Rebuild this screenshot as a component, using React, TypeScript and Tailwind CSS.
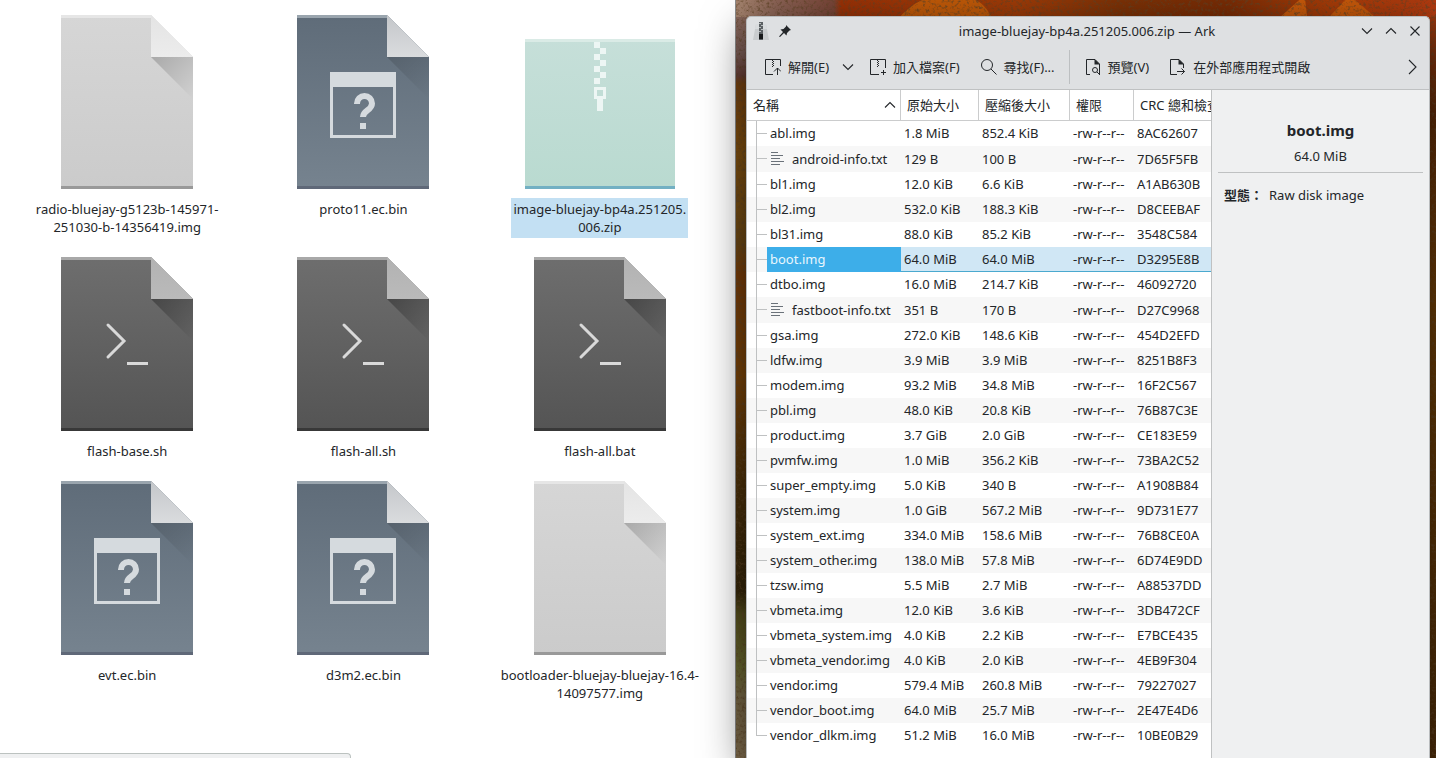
import type { ReactNode } from 'react';
import clsx from 'clsx';

type FileKind = 'raw' | 'binary' | 'script' | 'zip';

interface FileItem {
  name: string;
  lines: string[];
  kind: FileKind;
  selected?: boolean;
}

interface Entry {
  name: string;
  size: string;
  packed: string;
  crc: string;
}

const files: FileItem[] = [
  { name: 'radio', lines: ['radio-bluejay-g5123b-145971-', '251030-b-14356419.img'], kind: 'raw' },
  { name: 'proto11', lines: ['proto11.ec.bin'], kind: 'binary' },
  { name: 'image', lines: ['image-bluejay-bp4a.251205.', '006.zip'], kind: 'zip', selected: true },
  { name: 'flash-base', lines: ['flash-base.sh'], kind: 'script' },
  { name: 'flash-all-sh', lines: ['flash-all.sh'], kind: 'script' },
  { name: 'flash-all-bat', lines: ['flash-all.bat'], kind: 'script' },
  { name: 'evt', lines: ['evt.ec.bin'], kind: 'binary' },
  { name: 'd3m2', lines: ['d3m2.ec.bin'], kind: 'binary' },
  { name: 'bootloader', lines: ['bootloader-bluejay-bluejay-16.4-', '14097577.img'], kind: 'raw' },
];

const entries: Entry[] = [
  { name: 'abl.img', size: '1.8 MiB', packed: '852.4 KiB', crc: '8AC62607' },
  { name: 'android-info.txt', size: '129 B', packed: '100 B', crc: '7D65F5FB' },
  { name: 'bl1.img', size: '12.0 KiB', packed: '6.6 KiB', crc: 'A1AB630B' },
  { name: 'bl2.img', size: '532.0 KiB', packed: '188.3 KiB', crc: 'D8CEEBAF' },
  { name: 'bl31.img', size: '88.0 KiB', packed: '85.2 KiB', crc: '3548C584' },
  { name: 'boot.img', size: '64.0 MiB', packed: '64.0 MiB', crc: 'D3295E8B' },
  { name: 'dtbo.img', size: '16.0 MiB', packed: '214.7 KiB', crc: '46092720' },
  { name: 'fastboot-info.txt', size: '351 B', packed: '170 B', crc: 'D27C9968' },
  { name: 'gsa.img', size: '272.0 KiB', packed: '148.6 KiB', crc: '454D2EFD' },
  { name: 'ldfw.img', size: '3.9 MiB', packed: '3.9 MiB', crc: '8251B8F3' },
  { name: 'modem.img', size: '93.2 MiB', packed: '34.8 MiB', crc: '16F2C567' },
  { name: 'pbl.img', size: '48.0 KiB', packed: '20.8 KiB', crc: '76B87C3E' },
  { name: 'product.img', size: '3.7 GiB', packed: '2.0 GiB', crc: 'CE183E59' },
  { name: 'pvmfw.img', size: '1.0 MiB', packed: '356.2 KiB', crc: '73BA2C52' },
  { name: 'super_empty.img', size: '5.0 KiB', packed: '340 B', crc: 'A1908B84' },
  { name: 'system.img', size: '1.0 GiB', packed: '567.2 MiB', crc: '9D731E77' },
  { name: 'system_ext.img', size: '334.0 MiB', packed: '158.6 MiB', crc: '76B8CE0A' },
  { name: 'system_other.img', size: '138.0 MiB', packed: '57.8 MiB', crc: '6D74E9DD' },
  { name: 'tzsw.img', size: '5.5 MiB', packed: '2.7 MiB', crc: 'A88537DD' },
  { name: 'vbmeta.img', size: '12.0 KiB', packed: '3.6 KiB', crc: '3DB472CF' },
  { name: 'vbmeta_system.img', size: '4.0 KiB', packed: '2.2 KiB', crc: 'E7BCE435' },
  { name: 'vbmeta_vendor.img', size: '4.0 KiB', packed: '2.0 KiB', crc: '4EB9F304' },
  { name: 'vendor.img', size: '579.4 MiB', packed: '260.8 MiB', crc: '79227027' },
  { name: 'vendor_boot.img', size: '64.0 MiB', packed: '25.7 MiB', crc: '2E47E4D6' },
  { name: 'vendor_dlkm.img', size: '51.2 MiB', packed: '16.0 MiB', crc: '10BE0B29' },
];

const palettes = {
  raw: { top: '#d6d6d6', bottom: '#cbcbcb', edge: '#e6e6e6', base: '#999999', foldA: '#e4e4e4', foldB: '#ececec', shade: 0.2 },
  binary: { top: '#5f6c79', bottom: '#76838f', edge: '#9aa5ae', base: '#5f6878', foldA: '#c4c7ca', foldB: '#dadcde', shade: 0.14 },
  script: { top: '#6e6e6e', bottom: '#545454', edge: '#a8a8a8', base: '#383838', foldA: '#b2b2b2', foldB: '#bababa', shade: 0.32 },
};

function PageIcon({ kind }: { kind: 'raw' | 'binary' | 'script' }) {
  const p = palettes[kind];
  return (
    <svg width="132" height="174" viewBox="0 0 132 174" aria-hidden="true">
      <defs>
        <linearGradient id={`page-${kind}`} x1="0" y1="0" x2="0" y2="1">
          <stop offset="0" stopColor={p.top} />
          <stop offset="1" stopColor={p.bottom} />
        </linearGradient>
        <linearGradient id={`fold-${kind}`} x1="0" y1="0" x2="0" y2="1">
          <stop offset="0" stopColor={p.foldA} />
          <stop offset="1" stopColor={p.foldB} />
        </linearGradient>
        <linearGradient id={`shade-${kind}`} gradientUnits="userSpaceOnUse" x1="90" y1="42" x2="132" y2="84">
          <stop offset="0" stopColor="#000" stopOpacity={p.shade} />
          <stop offset="1" stopColor="#000" stopOpacity="0" />
        </linearGradient>
      </defs>
      <path d="M0 0H90L132 42V174H0Z" fill={`url(#page-${kind})`} />
      <path d="M0 0H90V3H0Z" fill={p.edge} />
      <path d="M0 171H132V174H0Z" fill={p.base} />
      <path d="M90 42H132V84Z" fill={`url(#shade-${kind})`} />
      <path d="M90 0L132 42H90Z" fill={`url(#fold-${kind})`} />
      {kind === 'binary' && (
        <g fill="#d5dade">
          <path fillRule="evenodd" d="M33 57H99V123H33ZM36 72V120H96V72Z" />
          <path d="M63 108H69V114H63Z" />
          <path d="M60 89V88.500A7.500 7.500 0 0 1 75 88.500C75 95.500 66 95 66 102" fill="none" stroke="#d5dade" strokeWidth="6" />
        </g>
      )}
      {kind === 'script' && (
        <g fill="none" stroke="#d9d9d9" strokeWidth="3">
          <path d="M47 68L63 84L47 100" strokeLinecap="round" />
          <path d="M66 106.500H87" />
        </g>
      )}
    </svg>
  );
}

function ZipIcon() {
  return (
    <svg width="150" height="150" viewBox="0 0 150 150" aria-hidden="true">
      <defs>
        <linearGradient id="zip-body" x1="0" y1="0" x2="0" y2="1">
          <stop offset="0" stopColor="#c6dfd9" />
          <stop offset="1" stopColor="#b9dad0" />
        </linearGradient>
      </defs>
      <path d="M0 0H150V150H0Z" fill="url(#zip-body)" />
      <path d="M0 0H150V3H0Z" fill="#daebe6" />
      <path d="M0 147H150V150H0Z" fill="#72b0c3" />
      <g fill="#edf6f4">
        <path d="M69 3h6v6h-6zM75 9h6v6h-6zM69 15h6v6h-6zM75 21h6v6h-6zM69 27h6v6h-6zM75 33h6v6h-6zM69 39h6v6h-6z" />
        <path fillRule="evenodd" d="M69 48H81V60H78V72H72V60H69ZM72 51V57H78V51Z" />
      </g>
    </svg>
  );
}

function Glyph({ children }: { children: ReactNode }) {
  return (
    <svg
      className="shrink-0"
      width="16"
      height="16"
      viewBox="0 0 16 16"
      fill="none"
      stroke="#232629"
      strokeWidth="1"
      aria-hidden="true"
    >
      {children}
    </svg>
  );
}

const zipTeeth = 'M7 1h1v1h-1zM8 2h1v1h-1zM7 3h1v1h-1zM8 4h1v1h-1zM7 5h1v1h-1zM8 6h1v1h-1zM7 7h1v1h-1z';

function ExtractGlyph() {
  return (
    <Glyph>
      <path d="M8 15.500H.5V.5H15.500V7" />
      <path d={zipTeeth} fill="#232629" stroke="none" />
      <path d="M12.500 16V9M9 12.500L12.500 9L16 12.500" />
    </Glyph>
  );
}

function AddGlyph() {
  return (
    <Glyph>
      <path d="M9 15.500H.5V.5H15.500V9" />
      <path d={zipTeeth} fill="#232629" stroke="none" />
      <path d="M13.500 11V16M11 13.500H16" />
    </Glyph>
  );
}

function SearchGlyph() {
  return (
    <Glyph>
      <circle cx="6" cy="6" r="5.500" />
      <path d="M10 10L15.500 15.500" />
    </Glyph>
  );
}

function PreviewGlyph() {
  return (
    <Glyph>
      <path d="M5 15.500H1.500V.5H10L14.500 5V15" />
      <path d="M9.500 0L15 5.500H9.500Z" fill="#232629" stroke="none" />
      <circle cx="10" cy="11" r="2.500" />
      <path d="M12 13L15 16" />
    </Glyph>
  );
}

function OpenGlyph() {
  return (
    <Glyph>
      <path d="M7 15.500H.5V.5H9L13.500 5V9" />
      <path d="M8.500 0L14 5.500H8.500Z" fill="#232629" stroke="none" />
      <path d="M7 12.500H14.500M11.500 9.500L14.500 12.500L11.500 15.500" />
    </Glyph>
  );
}

function Chevron({ d, width = 12, height = 12, label }: { d: string; width?: number; height?: number; label?: string }) {
  return (
    <svg
      width={width}
      height={height}
      viewBox={`0 0 ${width} ${height}`}
      fill="none"
      stroke="#232629"
      strokeWidth="1.100"
      role={label ? 'img' : undefined}
      aria-hidden={label ? undefined : true}
      aria-label={label}
    >
      <path d={d} />
    </svg>
  );
}

function TextFileGlyph() {
  return (
    <svg className="mr-[8px] ml-px shrink-0" width="13" height="13" viewBox="0 0 13 13" fill="none" stroke="#6b727a" aria-hidden="true">
      <path d="M0 .5H7M0 3.500H12M0 6.500H9M0 9.500H13M0 12.500H9" />
    </svg>
  );
}

function FileManager() {
  return (
    <main className="relative min-w-0 overflow-hidden bg-white">
      <ul className="grid grid-cols-3 gap-y-[19px] pt-[15px] pr-[17px] pl-[9px]">
        {files.map((f) => (
          <li key={f.name} className="flex flex-col items-center">
            <div className="flex h-[174px] items-end">
              {f.kind === 'zip' ? <ZipIcon /> : <PageIcon kind={f.kind} />}
            </div>
            <p
              className={clsx(
                'mt-[9px] p-[2px] text-center text-[13px] leading-[18px] whitespace-nowrap',
                f.selected && 'bg-[#c3e0f3]',
              )}
            >
              {f.lines.map((line) => (
                <span key={line} className="block">
                  {line}
                </span>
              ))}
            </p>
          </li>
        ))}
      </ul>
      {/* status popup peeking in at the bottom edge */}
      <div className="absolute bottom-0 left-0 h-[5px] w-[351px] rounded-tr-[4px] border-t border-r border-[#bcc2c0] bg-[#eff0f1]" />
    </main>
  );
}

function Wallpaper() {
  return (
    <svg className="absolute inset-0 h-full w-full" viewBox="0 0 701 758" preserveAspectRatio="none" aria-hidden="true">
      <defs>
        <linearGradient id="wall-left" x1="0" y1="0" x2="0" y2="1">
          <stop offset="0" stopColor="#8d6a5c" />
          <stop offset=".07" stopColor="#7d5f58" />
          <stop offset=".1" stopColor="#6b4038" />
          <stop offset=".11" stopColor="#7a4410" />
          <stop offset=".2" stopColor="#80500f" />
          <stop offset=".32" stopColor="#6f4a14" />
          <stop offset=".36" stopColor="#7a3d08" />
          <stop offset=".5" stopColor="#7a4408" />
          <stop offset=".65" stopColor="#4a300a" />
          <stop offset=".78" stopColor="#35260a" />
          <stop offset=".81" stopColor="#56501c" />
          <stop offset=".88" stopColor="#6b6a30" />
          <stop offset=".92" stopColor="#7a6a48" />
          <stop offset="1" stopColor="#7f6c4e" />
        </linearGradient>
        <linearGradient id="wall-top" x1="0" y1="0" x2="1" y2="0">
          <stop offset="0" stopColor="#a5846f" />
          <stop offset=".06" stopColor="#8c6355" />
          <stop offset=".14" stopColor="#7a4638" />
          <stop offset=".15" stopColor="#9c3206" />
          <stop offset=".4" stopColor="#a03c08" />
          <stop offset=".55" stopColor="#7e3206" />
          <stop offset=".7" stopColor="#7a2c05" />
          <stop offset=".85" stopColor="#a83c08" />
          <stop offset="1" stopColor="#b03a10" />
        </linearGradient>
        <linearGradient id="wall-right" x1="0" y1="0" x2="0" y2="1">
          <stop offset="0" stopColor="#a33a10" />
          <stop offset=".15" stopColor="#5c2a08" />
          <stop offset=".4" stopColor="#6a3c06" />
          <stop offset="1" stopColor="#4a2a08" />
        </linearGradient>
        <filter id="speckle" x="0" y="0" width="100%" height="100%">
          <feTurbulence type="fractalNoise" baseFrequency=".32" numOctaves="4" seed="7" />
          <feColorMatrix values="0 0 0 0 .12  0 0 0 0 .06  0 0 0 0 .02  3 0 0 0 -1.500" />
        </filter>
      </defs>
      <path d="M0 0H350V758H0Z" fill="url(#wall-left)" />
      <path d="M350 0H701V758H350Z" fill="url(#wall-right)" />
      <path d="M0 0H701V17H0Z" fill="url(#wall-top)" />
      <path d="M164 17C172 8 180 3 186 0H240C248 4 252 10 256 17Z" fill="#c25a08" />
      <path d="M545 17L564 0H570L572 17ZM594 17L610 0H620L640 17Z" fill="#c8590a" />
      <path d="M0 84H11V610H0ZM100 0H701V17H100ZM690 0H701V758H690Z" filter="url(#speckle)" opacity=".75" />
    </svg>
  );
}

function TitleBar() {
  return (
    <header className="grid h-[28px] grid-cols-[1fr_auto_1fr] items-center pr-[8px] pl-[6px]">
      <div className="flex items-center gap-[10px]">
        <svg width="16" height="18" viewBox="0 0 16 18" aria-hidden="true">
          <path d="M3 2H13L16 18H0Z" fill="#c9ccce" />
          <path d="M3 2H13L14 7H2Z" fill="#d9dcde" />
          <path d="M6 0H10V18H6Z" fill="#5b6063" />
          <path d="M6 1h2v1h-2zM8 3h2v1h-2zM6 5h2v1h-2zM8 7h2v1h-2zM6 9h2v1h-2z" fill="#b9bdbf" />
          <path d="M6 12H10V17H6Z" fill="#17191b" />
        </svg>
        <button aria-label="固定視窗">
          <svg className="block" width="12" height="12" viewBox="0 0 12 12" fill="#232629" aria-hidden="true">
            <path d="M7 0L12 5L10.500 5.500L8 8L7.500 10.500L5 8L1 12L0 11.500L4 7L1.500 4.500L4.500 4L7 1.500Z" />
          </svg>
        </button>
      </div>
      <h1 className="text-[13px] leading-[18px]">image-bluejay-bp4a.251205.006.zip — Ark</h1>
      <div className="flex items-center justify-end gap-3">
        <button aria-label="最小化">
          <Chevron d="M1 3.500L6 8.500L11 3.500" />
        </button>
        <button aria-label="最大化">
          <Chevron d="M1 8.500L6 3.500L11 8.500" />
        </button>
        <button aria-label="關閉">
          <Chevron d="M1.500 1.500L10.500 10.500M10.500 1.500L1.500 10.500" />
        </button>
      </div>
    </header>
  );
}

function ToolButton({ icon, children }: { icon: ReactNode; children: ReactNode }) {
  return (
    <button className="flex items-center gap-[7px] whitespace-nowrap">
      {icon}
      <span className="pt-[2px]">{children}</span>
    </button>
  );
}

function Toolbar() {
  return (
    <div role="toolbar" className="flex h-[44px] items-center pr-[11px] pl-[18px] text-[13px]">
      <ToolButton icon={<ExtractGlyph />}>解開(E)</ToolButton>
      <button aria-label="解開選項" className="ml-[13px]">
        <Chevron d="M1 3.500L6 8.500L11 3.500" />
      </button>
      <div className="ml-[16px] flex items-center gap-[21px]">
        <ToolButton icon={<AddGlyph />}>加入檔案(F)</ToolButton>
        <ToolButton icon={<SearchGlyph />}>尋找(F)...</ToolButton>
      </div>
      <div className="ml-[14px] h-[34px] w-px bg-[#bcbfc1]" />
      <div className="ml-[15px] flex items-center gap-[21px]">
        <ToolButton icon={<PreviewGlyph />}>預覽(V)</ToolButton>
        <ToolButton icon={<OpenGlyph />}>在外部應用程式開啟</ToolButton>
      </div>
      <button aria-label="更多" className="ml-auto">
        <Chevron d="M1 1L8 8L1 15" width={10} height={16} />
      </button>
    </div>
  );
}

function EntryRow({ entry, index }: { entry: Entry; index: number }) {
  const selected = entry.name === 'boot.img';
  const isText = entry.name.endsWith('.txt');
  const isLast = index === entries.length - 1;
  const cell = clsx(
    'pl-[3px] whitespace-nowrap',
    selected ? 'border-b border-[#4aa9cf] bg-[#d0e7f5]' : 'pb-px',
  );

  return (
    <tr className={clsx(isText ? 'h-[26px]' : 'h-[25px]', index % 2 === 1 && 'bg-[#f7f7f7]')}>
      <td className="p-0">
        <div className={clsx('flex', isText ? 'h-[26px]' : 'h-[25px]')}>
          <span className="ml-[9px] flex w-[11px] shrink-0 flex-col">
            <span className="h-[13px] border-b border-l border-[#bfc1c2]" />
            {!isLast && <span className="flex-1 border-l border-[#bfc1c2]" />}
          </span>
          <span
            className={clsx(
              'flex flex-1 items-center pb-px pl-[3px] whitespace-nowrap',
              selected && 'bg-[#3daee9] text-[#e9f6fd]',
            )}
          >
            {isText && <TextFileGlyph />}
            {entry.name}
          </span>
        </div>
      </td>
      <td className={cell}>{entry.size}</td>
      <td className={cell}>{entry.packed}</td>
      <td className={cell}>-rw-r--r--</td>
      <td className={cell}>{entry.crc}</td>
    </tr>
  );
}

function EntryTable() {
  const head = 'border-r border-b border-[#cbcccd] p-0 pl-[6px] text-left font-normal whitespace-nowrap';
  return (
    <div className="min-w-0 flex-1 overflow-hidden bg-white">
      <table className="w-[520px] table-fixed border-separate border-spacing-0 text-[13px] leading-[18px]">
        <colgroup>
          <col className="w-[154px]" />
          <col className="w-[78px]" />
          <col className="w-[91px]" />
          <col className="w-[64px]" />
          <col />
        </colgroup>
        <thead>
          <tr className="h-[31px]">
            <th className={head}>
              <div className="flex items-center justify-between pr-[4px]">
                名稱
                <Chevron d="M1 8.500L6 3.500L11 8.500" label="遞增排序" />
              </div>
            </th>
            <th className={head}>原始大小</th>
            <th className={head}>壓縮後大小</th>
            <th className={head}>權限</th>
            <th className={head}>CRC 總和檢查碼</th>
          </tr>
        </thead>
        <tbody>
          {entries.map((entry, i) => (
            <EntryRow key={entry.name} entry={entry} index={i} />
          ))}
        </tbody>
      </table>
    </div>
  );
}

function InfoPanel() {
  return (
    <aside className="w-[218px] shrink-0 border-l border-[#bfc1c2] bg-[#eff0f1] px-[6px] pt-[30px]">
      <h2 className="text-center text-[15px] leading-[20px] font-bold">boot.img</h2>
      <p className="mt-[7px] text-center text-[13px] leading-[18px]">64.0 MiB</p>
      <hr className="mt-[7px] border-[#bfc1c2]" />
      <dl className="flex gap-[6px] pt-[13px] pl-[6px] text-[13px] leading-[18px]">
        <dt className="font-bold">型態：</dt>
        <dd>Raw disk image</dd>
      </dl>
    </aside>
  );
}

export default function App() {
  return (
    <div className="grid h-screen grid-cols-[735fr_701fr] overflow-hidden bg-white font-['Noto_Sans','Noto_Sans_CJK_TC',sans-serif] text-[#232629]">
      <FileManager />
      <div className="relative flex min-h-0 min-w-0 border-l border-[#8c8c8c] pt-[16px] pr-[6px] pl-[10px]">
        <Wallpaper />
        <section className="relative flex min-w-0 flex-1 flex-col rounded-t-[5px] border border-b-0 border-[#b9bcbe] bg-[#dee0e2] shadow-[0_12px_44px_rgba(0,0,0,0.6)]">
          <TitleBar />
          <Toolbar />
          <div className="flex min-h-0 flex-1 border-t border-[#bfc1c2]">
            <EntryTable />
            <InfoPanel />
          </div>
        </section>
      </div>
    </div>
  );
}
